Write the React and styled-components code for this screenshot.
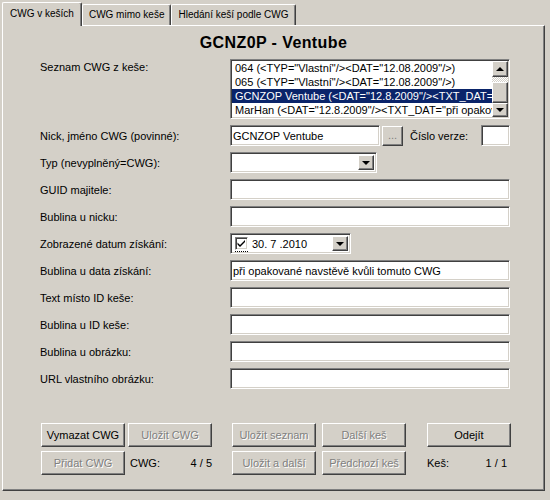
import styled, { createGlobalStyle, css } from "styled-components";

const GlobalStyle = createGlobalStyle`
  html, body { margin: 0; padding: 0; background: #d4d0c8; }
  body {
    font-family: "Liberation Sans", Arial, sans-serif;
    font-size: 11px;
    color: #000;
  }
`;

const sunken = css`
  border-style: solid;
  border-width: 1px;
  border-color: #808080 #ffffff #ffffff #808080;
  box-shadow: inset 1px 1px 0 #404040, inset -1px -1px 0 #d4d0c8;
`;

const raised = css`
  border-style: solid;
  border-width: 1px;
  border-color: #ffffff #404040 #404040 #ffffff;
  box-shadow: inset -1px -1px 0 #808080;
`;

const Window = styled.div`
  width: 550px;
  height: 500px;
  box-sizing: border-box;
  padding: 2px 5px 0 2px;
  background: #d4d0c8;
  overflow: hidden;
`;

const TabStrip = styled.div`
  display: flex;
  align-items: flex-end;
  height: 23px;
  position: relative;
  z-index: 1;
`;

const Tab = styled.div`
  box-sizing: border-box;
  height: ${p => (p.$active ? "24px" : "21px")};
  padding: ${p => (p.$active ? "5px 7px 0" : "4px 6px 0")};
  margin-bottom: ${p => (p.$active ? "-1px" : "0")};
  font-size: 10px;
  background: #d4d0c8;
  border-top: 1px solid #fff;
  border-left: 1px solid #fff;
  border-right: 1px solid #404040;
  box-shadow: inset -1px 0 0 #808080;
  border-radius: 2px 2px 0 0;
  white-space: nowrap;
`;

const Panel = styled.div`
  box-sizing: border-box;
  height: 466px;
  ${raised};
  padding: 7px 0 0 37px;
`;

const Title = styled.div`
  font-size: 16px;
  font-weight: bold;
  letter-spacing: 0.4px;
  line-height: 19px;
  text-align: center;
  margin-left: -37px;
`;

const Form = styled.div`
  display: grid;
  grid-template-columns: 190px 280px;
  row-gap: 6px;
  margin-top: 7px;
`;

const Label = styled.div`
  align-self: ${p => (p.$top ? "start" : "center")};
  padding-top: ${p => (p.$top ? "2px" : "0")};
  white-space: nowrap;
`;

const Field = styled.input`
  box-sizing: border-box;
  width: ${p => p.$width || "280px"};
  height: 21px;
  margin: 0;
  padding: 0 2px;
  background: #fff;
  font: inherit;
  color: #000;
  outline: none;
  ${sunken};
`;

const ListBox = styled.div`
  box-sizing: border-box;
  width: 280px;
  height: 60px;
  padding: 1px;
  background: #fff;
  display: flex;
  ${sunken};
`;

const ListRows = styled.div`
  flex: 1;
  min-width: 0;
  overflow: hidden;
`;

const ListRow = styled.div`
  height: 14px;
  line-height: 14px;
  padding-left: 3px;
  white-space: nowrap;
  overflow: hidden;
  background: ${p => (p.$selected ? "#0a246a" : "transparent")};
  color: ${p => (p.$selected ? "#fff" : "#000")};
`;

const ScrollBar = styled.div`
  width: 16px;
  display: flex;
  flex-direction: column;
`;

const ScrollButton = styled.div`
  box-sizing: border-box;
  width: 16px;
  height: ${p => p.$h || 16}px;
  background: #d4d0c8;
  display: flex;
  align-items: center;
  justify-content: center;
  ${raised};
`;

const Arrow = styled.span`
  width: 0;
  height: 0;
  border-left: 4px solid transparent;
  border-right: 4px solid transparent;
  ${p =>
    p.$up
      ? css`border-bottom: 4px solid #000;`
      : css`border-top: 4px solid #000;`}
`;

const Track = styled.div`
  flex: ${p => (p.$fill ? 1 : "none")};
  height: ${p => (p.$h ? p.$h + "px" : "auto")};
  background: repeating-conic-gradient(#ffffff 0 25%, #d4d0c8 0 50%) 0 0 / 2px 2px;
`;

const Row = styled.div`
  display: flex;
  align-items: center;
`;

const DotsButton = styled.div`
  box-sizing: border-box;
  width: 21px;
  height: 20px;
  margin-left: 2px;
  background: #d4d0c8;
  color: #808080;
  text-align: center;
  line-height: 16px;
  ${raised};
`;

const InlineLabel = styled.span`
  margin-left: 7px;
  flex: 1;
  white-space: nowrap;
`;

const Select = styled.div`
  box-sizing: border-box;
  width: ${p => p.$width};
  height: 21px;
  background: #fff;
  display: flex;
  align-items: stretch;
  padding: 2px;
  ${sunken};
`;

const SelectValue = styled.div`
  flex: 1;
  display: flex;
  align-items: center;
  gap: 4px;
  padding-left: 2px;
`;

const DropButton = styled(ScrollButton)`
  height: auto;
`;

const Check = styled.div`
  box-sizing: border-box;
  width: 13px;
  height: 13px;
  background: #fff;
  position: relative;
  ${sunken};
  &::after {
    content: "";
    position: absolute;
    left: -1px;
    right: -1px;
    bottom: -3px;
    border-bottom: 1px dotted #000;
  }
`;

const ButtonArea = styled.div`
  display: flex;
  margin-top: 34px;
  margin-left: 1px;
`;

const ButtonGroup = styled.div`
  display: grid;
  grid-template-columns: repeat(${p => p.$cols || 2}, 84px);
  grid-auto-rows: 24px;
  column-gap: ${p => p.$gap || 3}px;
  row-gap: 4px;
  margin-left: ${p => p.$offset || 0}px;
`;

const Button = styled.div`
  box-sizing: border-box;
  background: #d4d0c8;
  display: flex;
  align-items: center;
  justify-content: center;
  white-space: nowrap;
  color: ${p => (p.$disabled ? "#808080" : "#000")};
  text-shadow: ${p => (p.$disabled ? "1px 1px 0 #fff" : "none")};
  ${raised};
`;

const Counter = styled.div`
  display: flex;
  align-items: center;
  justify-content: space-between;
  padding: 0 ${p => p.$right || 0}px 0 2px;
  margin-left: ${p => p.$shift || 0}px;
`;

const items = [
  '064 (<TYP="Vlastní"/><DAT="12.08.2009"/>)',
  '065 (<TYP="Vlastní"/><DAT="12.08.2009"/>)',
  'GCNZOP Ventube (<DAT="12.8.2009"/><TXT_DAT="při opakované navstěvě kvůli tomuto CWG"/>)',
  'MarHan (<DAT="12.8.2009"/><TXT_DAT="při opakované navstěvě"/>)',
];

function CheckMark() {
  return (
    <svg width="11" height="11" viewBox="0 0 11 11" style={{ display: "block" }}>
      <path d="M1.5 4.5 L4 7 L9 2 L9 4 L4 9 L1.5 6.5 Z" fill="#000" />
    </svg>
  );
}

export default function App() {
  return (
    <>
      <GlobalStyle />
      <Window>
        <TabStrip>
          <Tab $active>CWG v keších</Tab>
          <Tab>CWG mimo keše</Tab>
          <Tab>Hledání keší podle CWG</Tab>
        </TabStrip>
        <Panel>
          <Title>GCNZ0P - Ventube</Title>
          <Form>
            <Label $top>Seznam CWG z keše:</Label>
            <ListBox>
              <ListRows>
                {items.map((t, i) => (
                  <ListRow key={i} $selected={i === 2}>{t}</ListRow>
                ))}
              </ListRows>
              <ScrollBar>
                <ScrollButton><Arrow $up /></ScrollButton>
                <Track $h={5} />
                <ScrollButton $h={21} />
                <Track $fill />
                <ScrollButton $h={14}><Arrow /></ScrollButton>
              </ScrollBar>
            </ListBox>

            <Label>Nick, jméno CWG (povinné):</Label>
            <Row>
              <Field $width="150px" readOnly value="GCNZOP Ventube" />
              <DotsButton>...</DotsButton>
              <InlineLabel>Číslo verze:</InlineLabel>
              <Field $width="29px" readOnly value="" />
            </Row>

            <Label>Typ (nevyplněný=CWG):</Label>
            <Row>
              <Select $width="147px">
                <SelectValue />
                <DropButton><Arrow /></DropButton>
              </Select>
            </Row>

            <Label>GUID majitele:</Label>
            <Field readOnly value="" />

            <Label>Bublina u nicku:</Label>
            <Field readOnly value="" />

            <Label>Zobrazené datum získání:</Label>
            <Row>
              <Select $width="121px">
                <SelectValue>
                  <Check><CheckMark /></Check>
                  <span>30. 7 .2010</span>
                </SelectValue>
                <DropButton><Arrow /></DropButton>
              </Select>
            </Row>

            <Label>Bublina u data získání:</Label>
            <Field readOnly value="při opakované navstěvě kvůli tomuto CWG" />

            <Label>Text místo ID keše:</Label>
            <Field readOnly value="" />

            <Label>Bublina u ID keše:</Label>
            <Field readOnly value="" />

            <Label>Bublina u obrázku:</Label>
            <Field readOnly value="" />

            <Label>URL vlastního obrázku:</Label>
            <Field readOnly value="" />
          </Form>

          <ButtonArea>
            <ButtonGroup $gap={3}>
              <Button>Vymazat CWG</Button>
              <Button $disabled>Uložit CWG</Button>
              <Button $disabled>Přidat CWG</Button>
              <Counter><span>CWG:</span><span>4 / 5</span></Counter>
            </ButtonGroup>
            <ButtonGroup $gap={6} $offset={20}>
              <Button $disabled>Uložit seznam</Button>
              <Button $disabled>Další keš</Button>
              <Button $disabled>Uložit a další</Button>
              <Button $disabled>Předchozí keš</Button>
            </ButtonGroup>
            <ButtonGroup $cols={1} $offset={21}>
              <Button>Odejít</Button>
              <Counter $shift={-2} $right={4}><span>Keš:</span><span>1 / 1</span></Counter>
            </ButtonGroup>
          </ButtonArea>
        </Panel>
      </Window>
    </>
  );
}
